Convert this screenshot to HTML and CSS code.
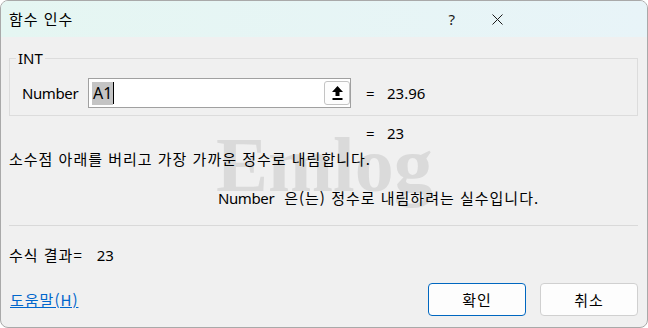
FILE: index.html
```html
<!DOCTYPE html>
<html lang="ko">
<head>
    <meta charset="UTF-8">
    <title>함수 인수</title>
    <link rel="stylesheet" href="styles.css">
</head>
<body>
    <div class="dialog">
        <div class="titlebar">
            <span class="title">함수 인수</span>
            <span class="help">?</span>
            <svg class="close" width="11" height="11" viewBox="0 0 11 11">
                <path d="M0.5 0.5 L10.5 10.5 M10.5 0.5 L0.5 10.5" stroke="#1a1a1a" stroke-width="1"/>
            </svg>
        </div>

        <div class="body">
            <div class="watermark">Emlog</div>

            <div class="group">
                <span class="group-title">INT</span>
                <div class="arg-row">
                    <span class="arg-label">Number</span>
                    <div class="input">
                        <span class="sel">A1</span><span class="caret"></span>
                        <span class="pick">
                            <svg width="11" height="15" viewBox="0 0 11 15">
                                <path d="M5.5 0 L11 6 L7.5 6 L7.5 10 L3.5 10 L3.5 6 L0 6 Z" fill="#000"/>
                                <rect x="0.5" y="12" width="10" height="2" fill="#000"/>
                            </svg>
                        </span>
                    </div>
                    <span class="eq">=</span>
                    <span class="val">23.96</span>
                </div>
            </div>

            <div class="result-row">
                <span class="eq">=</span>
                <span class="val">23</span>
            </div>

            <p class="desc">소수점 아래를 버리고 가장 가까운 정수로 내림합니다.</p>
            <p class="arg-desc"><span class="arg-name">Number</span>은(는) 정수로 내림하려는 실수입니다.</p>

            <div class="sep"></div>

            <div class="formula">수식 결과=<span class="formula-val">23</span></div>

            <div class="footer">
                <a class="link" href="#">도움말(H)</a>
                <div class="buttons">
                    <button class="btn primary">확인</button>
                    <button class="btn">취소</button>
                </div>
            </div>
        </div>
    </div>
</body>
</html>
```

FILE: styles.css
```css
* {
    margin: 0;
    padding: 0;
    box-sizing: border-box;
}
body {
    background: #ffffff;
    font-family: "Segoe UI", "Noto Sans", "Noto Sans CJK KR", sans-serif;
    font-size: 15px;
    color: #000;
}
.dialog {
    width: 648px;
    height: 328px;
    border: 1px solid #a9a9a9;
    border-radius: 8px;
    overflow: hidden;
    background: #f0f0f0;
}
.titlebar {
    height: 36px;
    background: linear-gradient(to right, #e5f6f2, #e8f4f8);
    display: flex;
    align-items: center;
    padding-left: 8px;
}
.title {
    font-family: "Noto Sans CJK KR", sans-serif;
    font-size: 15px;
    line-height: 20px;
    letter-spacing: 1px;
    flex: 1;
}
.help {
    font-size: 15px;
    line-height: 20px;
    margin-right: 37px;
    color: #1a1a1a;
}
.close {
    margin-right: 144px;
}
.body {
    position: relative;
    padding: 0 9px 0 8px;
}
.watermark {
    position: absolute;
    left: 215px;
    top: 62px;
    font-family: "Liberation Serif", serif;
    font-weight: bold;
    font-size: 78px;
    line-height: 90px;
    color: #dadada;
}
.group {
    position: relative;
    margin-top: 21px;
    border: 1px solid #dcdcdc;
    height: 58px;
    padding: 19px 0 0 12px;
}
.group-title {
    position: absolute;
    top: -11px;
    left: 6px;
    padding: 0 2px;
    background: #f0f0f0;
    line-height: 20px;
}
.arg-row {
    display: flex;
    align-items: center;
    height: 30px;
}
.arg-label {
    width: 66px;
    letter-spacing: -0.4px;
}
.input {
    position: relative;
    width: 263px;
    height: 30px;
    background: #fff;
    border: 1px solid #a0a0a0;
    display: flex;
    align-items: center;
    padding-left: 3px;
}
.sel {
    background: #c4c4c4;
    line-height: 23px;
    padding: 0 1px;
    font-size: 16px;
}
.caret {
    width: 1px;
    height: 22px;
    background: #000;
}
.pick {
    position: absolute;
    right: 0;
    top: 2px;
    width: 26px;
    height: 24px;
    border: 1px solid #c4c4c4;
    border-radius: 3px;
    background: #fdfdfd;
    display: flex;
    justify-content: center;
    align-items: center;
}
.eq {
    margin-left: 15px;
    width: 21px;
}
.result-row {
    position: relative;
    display: flex;
    line-height: 20px;
    margin-top: 7px;
    padding-left: 342px;
}
.desc {
    font-family: "Noto Sans CJK KR", sans-serif;
    position: relative;
    line-height: 20px;
    letter-spacing: 1px;
    margin-top: 6px;
}
.arg-desc {
    font-family: "Noto Sans CJK KR", sans-serif;
    position: relative;
    line-height: 20px;
    letter-spacing: 1px;
    margin-top: 19px;
    padding-left: 209px;
}
.arg-name {
    font-family: "Segoe UI", "Noto Sans", sans-serif;
    letter-spacing: -0.4px;
    margin-right: 10px;
}
.sep {
    margin-top: 17px;
    height: 1px;
    background: #d9d9d9;
}
.formula {
    font-family: "Noto Sans CJK KR", sans-serif;
    line-height: 20px;
    letter-spacing: 1px;
    margin-top: 19px;
}
.formula-val {
    font-family: "Segoe UI", "Noto Sans", sans-serif;
    letter-spacing: 0;
    margin-left: 14px;
}
.footer {
    display: flex;
    justify-content: space-between;
    align-items: center;
    margin-top: 18px;
}
.link {
    font-family: "Noto Sans CJK KR", sans-serif;
    color: #0066cc;
    text-decoration: underline;
    letter-spacing: 1px;
    margin-left: 1px;
    line-height: 20px;
}
.buttons {
    display: flex;
    gap: 14px;
}
.btn {
    width: 98px;
    height: 33px;
    border: 1px solid #d0d0d0;
    border-radius: 4px;
    background: #fdfdfd;
    font-family: "Noto Sans CJK KR", sans-serif;
    font-size: 15px;
    letter-spacing: 1px;
    color: #000;
}
.btn.primary {
    border-color: #0067c0;
}
```
